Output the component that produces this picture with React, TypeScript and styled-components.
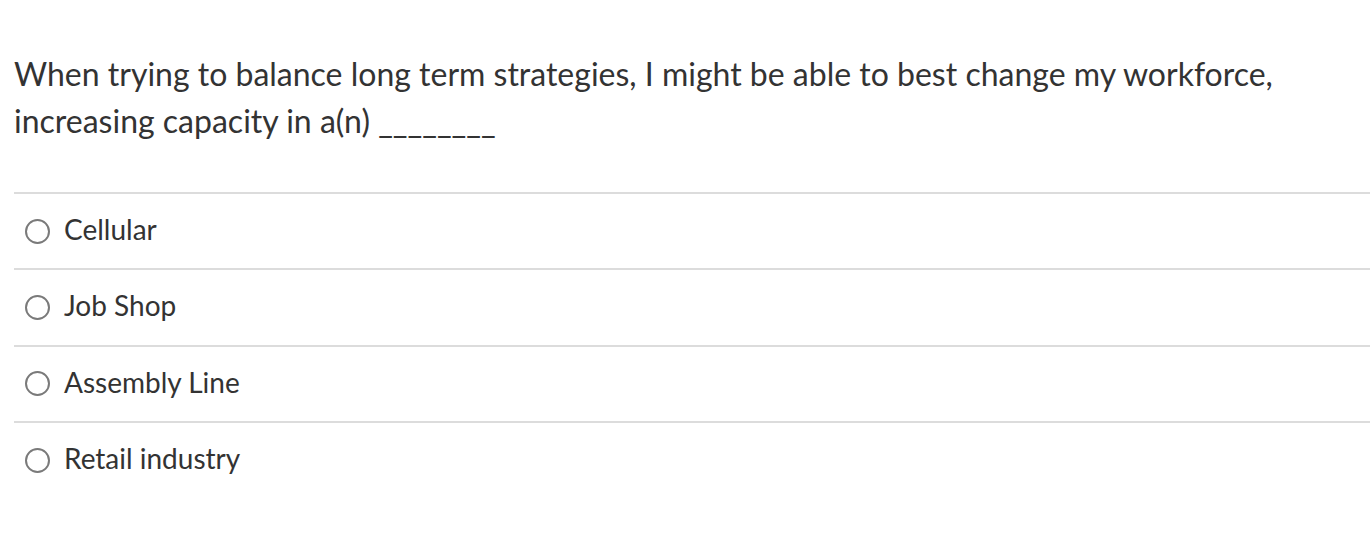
import styled, { createGlobalStyle } from 'styled-components';

const GlobalStyle = createGlobalStyle`
  body {
    margin: 0;
    background: #fff;
    font-family: Lato, "Noto Sans", sans-serif;
    color: #333;
  }
`;

const options = ['Cellular', 'Job Shop', 'Assembly Line', 'Retail industry'];

export default function App() {
  return (
    <>
      <GlobalStyle />
      <Question>
        <Prompt>
          When trying to balance long term strategies, I might be able to best change my workforce,
          increasing capacity in a(n) ________
        </Prompt>
        <AnswerList>
          {options.map((label) => (
            <Answer key={label}>
              <Radio />
              <AnswerText>{label}</AnswerText>
            </Answer>
          ))}
        </AnswerList>
      </Question>
    </>
  );
}

const Question = styled.div`
  padding: 50px 0 0 14px;
  width: 1356px;
`;

const Prompt = styled.p`
  margin: 0;
  font-size: 32px;
  line-height: 47px;
  padding-right: 60px;
`;

const AnswerList = styled.ul`
  list-style: none;
  margin: 48px 0 0;
  padding: 0;
`;

const Answer = styled.li`
  display: flex;
  align-items: center;
  gap: 14px;
  height: 74.3px;
  padding-left: 11px;
  border-top: 2px solid #dcdcdc;
`;

const Radio = styled.span`
  width: 21px;
  height: 21px;
  border: 2px solid #7a7a7a;
  border-radius: 50%;
  flex-shrink: 0;
`;

const AnswerText = styled.span`
  font-size: 28px;
  padding-bottom: 4px;
`;
